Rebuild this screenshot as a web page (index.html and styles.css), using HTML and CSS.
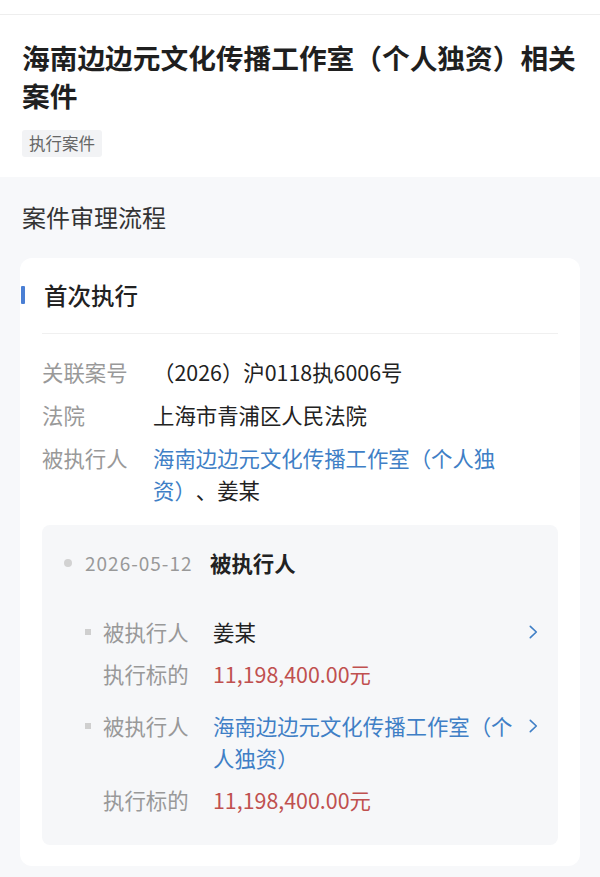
FILE: index.html
```html
<!DOCTYPE html>
<html lang="zh-CN">
<head>
<meta charset="UTF-8" />
<meta name="viewport" content="width=device-width, initial-scale=1" />
<title>相关案件</title>
<link rel="stylesheet" href="styles.css">
</head>
<body>

<div class="topbar"></div>

<header class="head">
  <h1 class="title">海南边边元文化传播工作室（个人独资）相关案件</h1>
  <div class="tags"><span class="tag">执行案件</span></div>
</header>

<main class="flow">
  <h2 class="flow-title">案件审理流程</h2>

  <section class="card">
    <div class="card-head">
      <h3 class="card-title">首次执行</h3>
    </div>

    <dl class="info">
      <dt>关联案号</dt>
      <dd>（2026）沪0118执6006号</dd>
      <dt>法院</dt>
      <dd>上海市青浦区人民法院</dd>
      <dt>被执行人</dt>
      <dd><span class="link">海南边边元文化传播工作室（个人独资）</span>、姜某</dd>
    </dl>

    <div class="panel">
      <div class="tl-head">
        <span class="dot"></span>
        <span class="date">2026-05-12</span>
        <span class="tl-name">被执行人</span>
      </div>

      <div class="parties">
        <div class="party">
          <span class="sq"></span>
          <span class="lbl">被执行人</span>
          <span class="val">姜某</span>
          <svg class="chev" width="9" height="14" viewBox="0 0 9 14"><path d="M1.3 1.3l6 5.7-6 5.7" fill="none" stroke="#3f7fc6" stroke-width="1.6" stroke-linecap="round" stroke-linejoin="round"/></svg>
          <span></span>
          <span class="lbl">执行标的</span>
          <span class="val money">11,198,400.00元</span>
          <span></span>
        </div>

        <div class="party">
          <span class="sq"></span>
          <span class="lbl">被执行人</span>
          <span class="val link">海南边边元文化传播工作室（个人独资）</span>
          <svg class="chev" width="9" height="14" viewBox="0 0 9 14"><path d="M1.3 1.3l6 5.7-6 5.7" fill="none" stroke="#3f7fc6" stroke-width="1.6" stroke-linecap="round" stroke-linejoin="round"/></svg>
          <span></span>
          <span class="lbl">执行标的</span>
          <span class="val money">11,198,400.00元</span>
          <span></span>
        </div>
      </div>
    </div>
  </section>
</main>

</body>
</html>
```

FILE: styles.css
```css
body {
  margin: 0;
  background: #f7f8fa;
  font-family: "Noto Sans CJK SC", "Noto Sans", sans-serif;
  color: #222;
  text-spacing-trim: space-all;
}
.topbar {
  height: 14px;
  background: #fff;
  border-bottom: 1px solid #eee;
}
.head {
  background: #fff;
  padding: 23px 22px 20px;
}
.title {
  margin: 0;
  font-size: 27.7px;
  line-height: 38px;
  font-weight: 700;
  color: #1f1f1f;
}
.tags {
  display: flex;
  margin-top: 16px;
}
.tag {
  height: 27px;
  line-height: 27px;
  padding: 0 7px;
  font-size: 16.5px;
  color: #666;
  background: #f2f3f5;
  border-radius: 3px;
}
.flow {
  padding: 24px 0 11px;
}
.flow-title {
  margin: 0 22px;
  font-size: 24px;
  line-height: 32px;
  font-weight: 400;
  color: #333;
}
.card {
  margin: 25px 20px 0;
  padding: 21px 22px;
  background: #fff;
  border-radius: 12px;
}
.card-head {
  padding-bottom: 22px;
  border-bottom: 1px solid #f0f0f0;
}
.card-title {
  display: flex;
  align-items: center;
  margin: 0 0 0 -21px;
  font-size: 23.5px;
  line-height: 32px;
  font-weight: 500;
  color: #222;
}
.card-title::before {
  content: "";
  width: 4px;
  height: 18px;
  margin-right: 19px;
  background: #4a7fd4;
  border-radius: 1px;
}
.info {
  display: grid;
  grid-template-columns: 111px 345px;
  row-gap: 11px;
  margin: 22px 0 0;
  font-size: 21.4px;
  line-height: 32px;
}
.info dt {
  color: #999;
}
.info dd {
  margin: 0;
  color: #222;
}
.link {
  color: #3f7fc6;
}
.panel {
  margin-top: 19px;
  padding: 22px 20px 29px 22px;
  background: #f6f7f9;
  border-radius: 8px;
}
.tl-head {
  display: flex;
  align-items: center;
  line-height: 32px;
}
.dot {
  width: 8px;
  height: 8px;
  margin-right: 13px;
  border-radius: 50%;
  background: #d2d2d2;
}
.date {
  width: 125px;
  font-size: 19px;
  letter-spacing: 1px;
  color: #999;
}
.tl-name {
  font-size: 21.4px;
  font-weight: 700;
  color: #222;
}
.parties {
  display: flex;
  flex-direction: column;
  gap: 20px;
  margin-top: 37px;
  padding-left: 21px;
}
.party {
  display: grid;
  grid-template-columns: 18px 110px 1fr 18px;
  row-gap: 10px;
  font-size: 21.4px;
  line-height: 32px;
}
.sq {
  width: 6px;
  height: 6px;
  margin-top: 13px;
  background: #cfcfcf;
}
.lbl {
  color: #999;
}
.val {
  color: #222;
}
.val.link {
  color: #3f7fc6;
}
.money {
  color: #c0504f;
}
.chev {
  justify-self: end;
  margin-top: 9px;
}
```
